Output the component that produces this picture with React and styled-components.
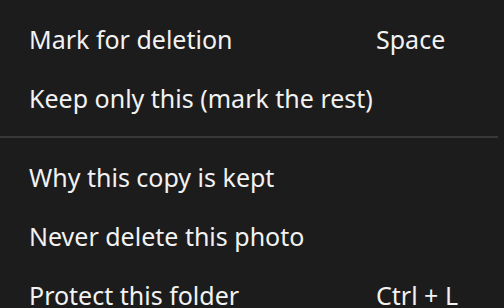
import React from 'react'
import styled, { createGlobalStyle } from 'styled-components'

const Global = createGlobalStyle`
    html, body {
        margin: 0;
        padding: 0;
        background: #1c1c1c;
    }
`
const Menu = styled.div`
    width: 504px;
    height: 308px;
    overflow: hidden;
    background: #1c1c1c;
    padding-top: 10px;
    box-sizing: border-box;
    font-family: "Noto Sans", "Open Sans", sans-serif;
    font-size: 25px;
    color: #f2f2f2;
`
const Item = styled.div`
    display: grid;
    grid-template-columns: 347px 1fr;
    align-items: center;
    height: 59px;
    padding-left: 29px;
    line-height: 1;
`
const Shortcut = styled.span`
    white-space: nowrap;
`
const Separator = styled.div`
    height: 2px;
    width: 498px;
    background: #383838;
    margin: 8px 0 10px;
`

const itens = [
    [{ label: 'Mark for deletion', key: 'Space' }, { label: 'Keep only this (mark the rest)' }],
    [{ label: 'Why this copy is kept' }, { label: 'Never delete this photo' }, { label: 'Protect this folder', key: 'Ctrl + L' }],
]

class App extends React.Component {
    render() {
        return (
            <>
                <Global />
                <Menu>
                    {itens.map((grupo, i) => (
                        <React.Fragment key={i}>
                            {i > 0 && <Separator />}
                            {grupo.map(item => (
                                <Item key={item.label}>
                                    <span>{item.label}</span>
                                    <Shortcut>{item.key}</Shortcut>
                                </Item>
                            ))}
                        </React.Fragment>
                    ))}
                </Menu>
            </>
        )
    }
}
export default App
